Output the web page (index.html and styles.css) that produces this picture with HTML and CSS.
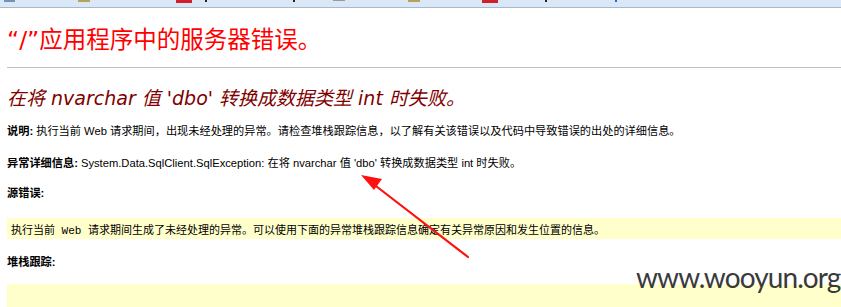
FILE: index.html
```html
<!DOCTYPE html>
<html lang="zh-CN">
<head>
<meta charset="utf-8">
<title>运行时错误</title>
<link rel="stylesheet" href="styles.css">
</head>
<body>
<div class="topbar">
  <span class="tb tb-blue"></span>
  <span class="tb tb-gold tb-a"></span>
  <span class="tb tb-red tb-b"></span>
  <span class="tb tb-dark tb-c"></span>
  <span class="tb tb-dark tb-d"></span>
  <span class="tb tb-gray tb-e"></span>
  <span class="tb tb-gold tb-f"></span>
  <span class="tb tb-red tb-g"></span>
  <span class="tb tb-dark tb-h"></span>
  <span class="tb tb-blue2 tb-i"></span>
</div>
<main class="page">
  <h1 class="title">“/”应用程序中的服务器错误。</h1>
  <hr class="rule">
  <h2 class="subtitle">在将 nvarchar 值 'dbo' 转换成数据类型 int 时失败。</h2>
  <p class="line line-1"><b>说明:</b> 执行当前 Web 请求期间，出现未经处理的异常。请检查堆栈跟踪信息，以了解有关该错误以及代码中导致错误的出处的详细信息。</p>
  <p class="line line-2"><b>异常详细信息:</b> System.Data.SqlClient.SqlException: 在将 nvarchar 值 'dbo' 转换成数据类型 int 时失败。</p>
  <p class="line line-3"><b>源错误:</b></p>
  <div class="codebox"><code>执行当前 Web 请求期间生成了未经处理的异常。可以使用下面的异常堆栈跟踪信息确定有关异常原因和发生位置的信息。</code></div>
  <p class="line line-4"><b>堆栈跟踪:</b></p>
  <div class="codebox codebox-tall"></div>
</main>
<svg class="arrow" width="841" height="307" viewBox="0 0 841 307">
  <line x1="468" y1="257" x2="372" y2="183" stroke="#ff1010" stroke-width="2.2" stroke-linecap="round"/>
  <polygon points="361,175 382,179 374,190" fill="#ff1010"/>
</svg>
<div class="watermark">www.wooyun.org</div>
</body>
</html>
```
FILE: styles.css
```css
html, body {
  margin: 0;
  padding: 0;
  background: #fff;
}
body {
  width: 841px;
  height: 307px;
  overflow: hidden;
  position: relative;
  font-family: "Liberation Sans", "Noto Sans CJK SC", sans-serif;
  font-size: 11px;
  color: #000;
}
.topbar {
  height: 7px;
  background: #dae7f7;
  border-bottom: 1px solid #a9b9cd;
  display: flex;
  align-items: flex-start;
}
.tb {
  display: block;
  height: 2px;
}
.tb-blue { width: 11px; margin-left: 4px; background: #6f94b8; }
.tb-gold { background: #b8a25a; width: 12px; }
.tb-red { background: #d0202a; width: 16px; height: 3px; }
.tb-dark { background: #222; width: 2px; }
.tb-gray { background: #999; width: 12px; height: 1px; }
.tb-blue2 { background: #2a6cc0; width: 2px; }
.tb-a { margin-left: 63px; }
.tb-b { margin-left: 86px; }
.tb-c { margin-left: 13px; }
.tb-d { margin-left: 86px; }
.tb-e { margin-left: 38px; }
.tb-f { margin-left: 63px; }
.tb-g { margin-left: 62px; }
.tb-h { margin-left: 47px; }
.tb-i { margin-left: 68px; }

.page {
  padding: 0 0 0 7px;
}
.title {
  margin: 17px 0 0;
  font-family: "DejaVu Sans", "Noto Sans CJK SC", sans-serif;
  font-weight: normal;
  font-size: 23.5px;
  line-height: 30px;
  color: #ff0000;
}
.rule {
  margin: 12px 0 0;
  border: 0;
  border-top: 1px solid #c0c0c0;
  height: 0;
}
.subtitle {
  margin: 18px 0 0;
  font-family: "DejaVu Sans", "Noto Sans CJK SC", sans-serif;
  font-style: italic;
  font-weight: normal;
  font-size: 19px;
  line-height: 24px;
  color: #800000;
}
.line {
  margin: 0;
  line-height: 16px;
  font-size: 11.2px;
}
.line b {
  font-weight: bold;
}
.line-1 { margin-top: 13px; }
.line-2 { margin-top: 16px; }
.line-3 { margin-top: 14px; }
.line-4 { margin-top: 15px; }
.codebox {
  margin-top: 17px;
  background: #ffffcc;
  height: 21px;
  padding: 0 4px;
  display: flex;
  align-items: center;
}
.codebox code {
  font-family: "Liberation Mono", "Noto Sans CJK SC", monospace;
  font-size: 11px;
}
.codebox-tall {
  height: 24px;
  margin-top: 14px;
}
.arrow {
  position: absolute;
  left: 0;
  top: 0;
  pointer-events: none;
}
.watermark {
  position: absolute;
  left: 636px;
  top: 260px;
  font-family: "Lato", "Noto Sans", sans-serif;
  font-size: 28px;
  line-height: 34px;
  letter-spacing: -0.9px;
  color: #3a3a3a;
}
```
